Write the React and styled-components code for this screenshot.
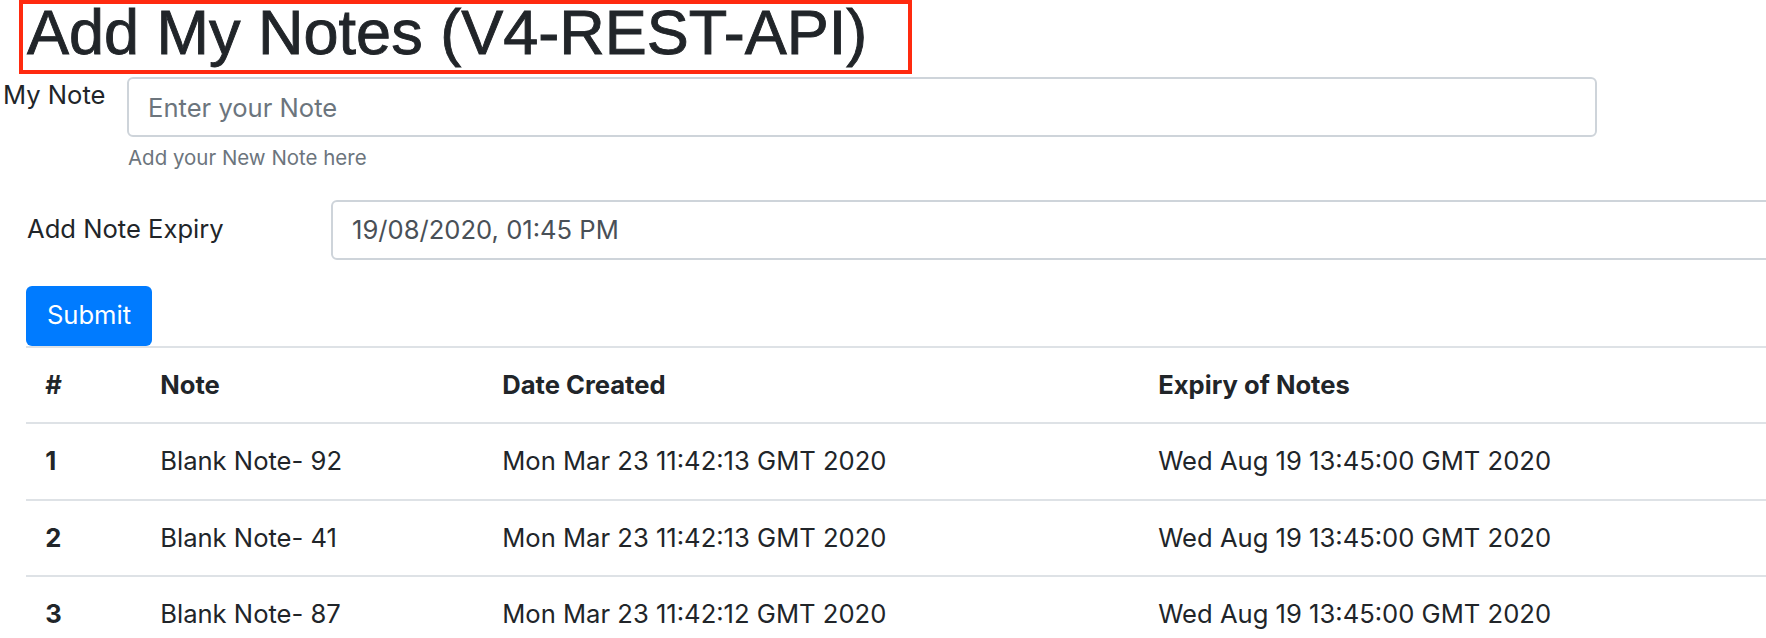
import React from "react";
import styled, { createGlobalStyle } from "styled-components";

const GlobalStyle = createGlobalStyle`
  html, body {
    margin: 0;
    padding: 0;
    overflow: hidden;
    background: #ffffff;
  }
  body {
    font-family: Inter, "Noto Sans", "Liberation Sans", sans-serif;
    font-size: 25.6px;
    line-height: 1.5;
    color: #212529;
  }
  * { box-sizing: border-box; }
`;

const Page = styled.div`
  display: flex;
  flex-direction: column;
  align-items: flex-start;
  width: 2000px;
`;

const TitleFrame = styled.div`
  margin-left: 19px;
  width: 893px;
  height: 74px;
  border: 4px solid #ff2a0f;
`;

const Title = styled.h1`
  margin: 0;
  padding-left: 4px;
  font-family: "Liberation Sans", Arial, sans-serif;
  font-weight: 400;
  font-size: 63px;
  line-height: 57px;
  color: #212529;
  white-space: nowrap;
  -webkit-text-stroke: 0.9px #212529;
`;

const FormGroup = styled.div`
  display: flex;
  align-items: ${(p) => (p.$center ? "center" : "flex-start")};
  margin-top: ${(p) => p.$top}px;
`;

const Label = styled.label`
  flex: none;
  width: ${(p) => p.$width}px;
  padding-left: ${(p) => p.$indent}px;
  margin-top: ${(p) => p.$shift || 0}px;
  line-height: 38.4px;
  white-space: nowrap;
`;

const FieldColumn = styled.div`
  display: flex;
  flex-direction: column;
  width: ${(p) => p.$width}px;
`;

const Input = styled.input`
  width: ${(p) => (p.$width ? `${p.$width}px` : "100%")};
  height: 60px;
  padding: 0 19px;
  border: 2px solid #ced4da;
  border-radius: 6px;
  background: #fff;
  font-family: Inter, "Noto Sans", sans-serif;
  font-size: 25.6px;
  color: #495057;
  outline: none;
  &::placeholder {
    color: #6c757d;
    opacity: 1;
  }
`;

const Help = styled.small`
  display: block;
  margin-top: 6.4px;
  padding-left: 1px;
  font-size: 20.48px;
  line-height: 30.7px;
  color: #6c757d;
`;

const SubmitButton = styled.button`
  margin-top: 26px;
  margin-left: 26px;
  width: 126px;
  height: 60px;
  padding: 0;
  border: none;
  border-radius: 6px;
  background: #007bff;
  color: #fff;
  font-family: Inter, "Noto Sans", sans-serif;
  font-size: 25.6px;
  line-height: 38.4px;
  cursor: pointer;
`;

const Table = styled.table`
  margin-left: 26px;
  width: 1900px;
  border-collapse: collapse;
  table-layout: fixed;
`;

const Th = styled.th`
  width: ${(p) => (p.$w ? `${p.$w}px` : "auto")};
  padding: 18px 19.2px;
  text-align: left;
  font-weight: 700;
  line-height: 38.4px;
  border-top: 2px solid #dee2e6;
  border-bottom: 2px solid #dee2e6;
  white-space: nowrap;
`;

const Td = styled.td`
  padding: 18px 19.2px;
  line-height: 38.4px;
  border-top: 2px solid #dee2e6;
  font-weight: ${(p) => (p.$bold ? 700 : 400)};
  white-space: nowrap;
`;

const notes = [
  { id: 1, text: "Blank Note- 92", created: "Mon Mar 23 11:42:13 GMT 2020", expiry: "Wed Aug 19 13:45:00 GMT 2020" },
  { id: 2, text: "Blank Note- 41", created: "Mon Mar 23 11:42:13 GMT 2020", expiry: "Wed Aug 19 13:45:00 GMT 2020" },
  { id: 3, text: "Blank Note- 87", created: "Mon Mar 23 11:42:12 GMT 2020", expiry: "Wed Aug 19 13:45:00 GMT 2020" },
];

export default function App() {
  return (
    <>
      <GlobalStyle />
      <Page>
        <TitleFrame>
          <Title>Add My Notes (V4-REST-API)</Title>
        </TitleFrame>

        <FormGroup $top={3}>
          <Label $width={127} $indent={3} $shift={-1.5}>My Note</Label>
          <FieldColumn $width={1470}>
            <Input type="text" placeholder="Enter your Note" />
            <Help>Add your New Note here</Help>
          </FieldColumn>
        </FormGroup>

        <FormGroup $top={25.6} $center>
          <Label $width={331} $indent={27}>Add Note Expiry</Label>
          <Input type="text" $width={1600} defaultValue="19/08/2020, 01:45 PM" />
        </FormGroup>

        <SubmitButton type="button">Submit</SubmitButton>

        <Table>
          <thead>
            <tr>
              <Th $w={115}>#</Th>
              <Th $w={342}>Note</Th>
              <Th $w={656}>Date Created</Th>
              <Th>Expiry of Notes</Th>
            </tr>
          </thead>
          <tbody>
            {notes.map((n) => (
              <tr key={n.id}>
                <Td $bold>{n.id}</Td>
                <Td>{n.text}</Td>
                <Td>{n.created}</Td>
                <Td>{n.expiry}</Td>
              </tr>
            ))}
          </tbody>
        </Table>
      </Page>
    </>
  );
}
